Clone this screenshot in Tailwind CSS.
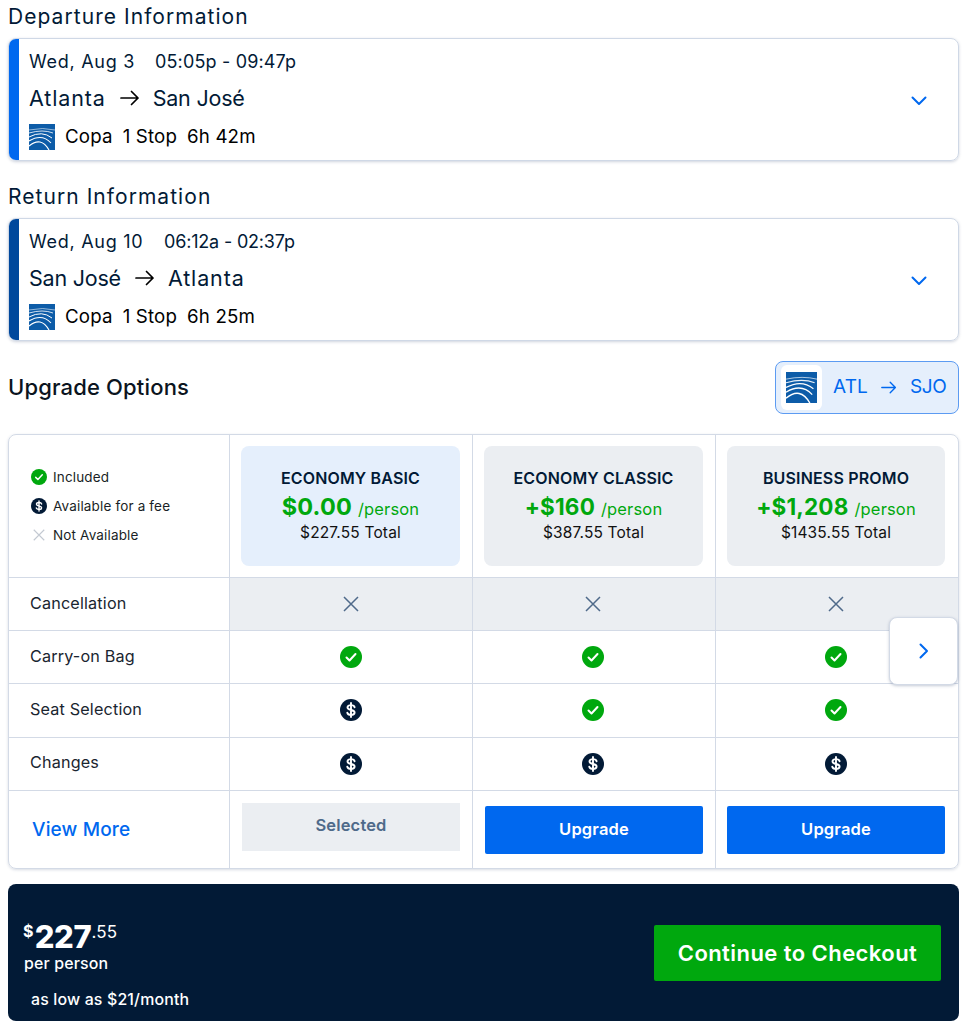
<!DOCTYPE html>
<html><head><meta charset="utf-8"><script src="https://cdn.jsdelivr.net/npm/@tailwindcss/browser@4"></script></head>
<body class="bg-white">
<svg class="hidden"><defs>
<symbol id="logo" viewBox="0 0 26 26"><rect width="26" height="26" fill="#0d5ca8"/><g fill="none" stroke="#fff"><path d="M0 6Q14 3 26 6" stroke-width=".7" opacity=".8"/><path d="M0 9Q14 5 24 9" stroke-width=".9" opacity=".9"/><path d="M0 13Q13 6 23 14" stroke-width="1"/><path d="M0 17Q13 9 22 19" stroke-width="1.1"/><path d="M0 22Q12 12 20 26" stroke-width="1.2"/></g></symbol>
<symbol id="chk" viewBox="0 0 22 22"><circle cx="11" cy="11" r="11" fill="#00a80e"/><path d="M6.5 11.5l3 3 6-6.5" fill="none" stroke="#fff" stroke-width="2" stroke-linecap="round" stroke-linejoin="round"/></symbol>
<symbol id="fee" viewBox="0 0 22 22"><circle cx="11" cy="11" r="11" fill="#021a36"/><path d="M14.6 8.2C14.3 6.9 13 6.1 11 6.1 8.9 6.1 7.5 7 7.5 8.5 7.5 10 8.9 10.5 11 11 13.2 11.5 14.6 12 14.6 13.5 14.6 15 13.100 15.900 11 15.900 8.900 15.900 7.600 15 7.300 13.700M11 4v14" fill="none" stroke="#fff" stroke-width="1.900" stroke-linecap="round"/></symbol>
<symbol id="x" viewBox="0 0 16 16"><path d="M1 1l14 14M15 1L1 15" fill="none" stroke="currentColor" stroke-width="1.500"/></symbol>
<symbol id="chev" viewBox="0 0 16 10"><path d="M1.500 1.500L8 8l6.500-6.500" fill="none" stroke="#0068ef" stroke-width="2" stroke-linecap="round" stroke-linejoin="round"/></symbol>
<symbol id="arr" viewBox="0 0 20 16"><path d="M1 8h17M11.500 1.500L18 8l-6.500 6.500" fill="none" stroke="currentColor" stroke-width="1.700" stroke-linecap="round" stroke-linejoin="round"/></symbol>
</defs></svg>

<main class="w-[951px] ml-2 font-['Inter',sans-serif] text-[#021a36] tracking-[0.01em]">
  <h2 class="h-[38px] pt-[4px] text-[21px] leading-[26px] tracking-[0.05em]">Departure Information</h2>
  <section class="h-[123px] flex items-stretch rounded-lg border border-[#cfd8e6] shadow-[0_1px_3px_rgba(60,80,120,0.25)] overflow-hidden">
    <div class="w-[10px] bg-[#0068ef] shrink-0"></div>
    <div class="flex-1 pl-[10px] pt-[11px]">
      <p class="text-[18px] leading-[24px] flex"><span class="w-[126px] tracking-[0.04em]">Wed, Aug 3</span><span>05:05p - 09:47p</span></p>
      <p class="mt-[11px] text-[21.500px] leading-[26px] flex items-center"><span class="tracking-[0.04em]">Atlanta</span><svg class="w-[20px] h-[16px] ml-[14px] mr-[13px] text-black"><use href="#arr"/></svg><span class="tracking-[-0.01em]">San José</span></p>
      <div class="mt-[13px] flex items-center text-black text-[18.700px] leading-[26px]"><svg class="w-[26px] h-[26px] mr-[10px]"><use href="#logo"/></svg><span class="mr-[10px]">Copa</span><span class="mr-[10px]">1 Stop</span><span>6h 42m</span></div>
    </div>
    <div class="w-[80px] flex items-center justify-start pl-[33px] pt-[2px]"><svg class="w-[16px] h-[10px]"><use href="#chev"/></svg></div>
  </section>
  <h2 class="h-[57px] pt-[23px] text-[21px] leading-[26px] tracking-[0.05em]">Return Information</h2>
  <section class="h-[123px] flex items-stretch rounded-lg border border-[#cfd8e6] shadow-[0_1px_3px_rgba(60,80,120,0.25)] overflow-hidden">
    <div class="w-[10px] bg-[#00489c] shrink-0"></div>
    <div class="flex-1 pl-[10px] pt-[11px]">
      <p class="text-[18px] leading-[24px] flex"><span class="w-[135px] tracking-[0.04em]">Wed, Aug 10</span><span class="tracking-[-0.01em]">06:12a - 02:37p</span></p>
      <p class="mt-[11px] text-[21.500px] leading-[26px] flex items-center"><span class="tracking-[-0.01em]">San José</span><svg class="w-[20px] h-[16px] ml-[14px] mr-[13px] text-black"><use href="#arr"/></svg><span class="tracking-[0.04em]">Atlanta</span></p>
      <div class="mt-[13px] flex items-center text-black text-[18.700px] leading-[26px]"><svg class="w-[26px] h-[26px] mr-[10px]"><use href="#logo"/></svg><span class="mr-[10px]">Copa</span><span class="mr-[10px]">1 Stop</span><span>6h 25m</span></div>
    </div>
    <div class="w-[80px] flex items-center justify-start pl-[33px] pt-[2px]"><svg class="w-[16px] h-[10px]"><use href="#chev"/></svg></div>
  </section>

  <div class="mt-[20px] h-[53px] flex items-center justify-between">
    <h2 class="text-[22px] leading-[26px] font-medium text-[#0b1420] pb-[2px]">Upgrade Options</h2>
    <div class="w-[184px] h-[53px] rounded-lg border border-[#5c9bf2] bg-[#e5effc] flex items-center text-[#0068ef] text-[19px] pl-[5px]">
      <div class="w-[41px] h-[45px] bg-white rounded-md flex items-center justify-center"><svg class="w-[31px] h-[31px]"><use href="#logo"/></svg></div>
      <span class="ml-[11px]">ATL</span><svg class="w-[16px] h-[13px] mx-[13px]"><use href="#arr"/></svg><span class="tracking-[-0.02em]">SJO</span>
    </div>
  </div>

  <section class="relative mt-[20px] h-[435px] rounded-lg border border-[#d3dae6] shadow-[0_1px_3px_rgba(60,80,120,0.2)]">
    <div class="grid grid-cols-[221px_243px_243px_242px] grid-rows-[143px_53px_53px_54px_53px_77px] h-full text-[#021a36]">
      <div class="border-r border-[#d3dae6] border-b pl-[22px] pt-[34px] text-[13.500px] text-[#1a1f26]">
        <div class="flex items-center h-[16px]"><svg class="w-[16px] h-[16px] mr-[6px]"><use href="#chk"/></svg>Included</div>
        <div class="flex items-center h-[16px] mt-[13px]"><svg class="w-[16px] h-[16px] mr-[6px]"><use href="#fee"/></svg>Available for a fee</div>
        <div class="flex items-center h-[16px] mt-[13px]"><svg class="w-[12px] h-[12px] ml-[2px] mr-[8px] text-[#c3c9d2]"><use href="#x"/></svg>Not Available</div>
      </div>
      <div class="border-r border-b border-[#d3dae6] pl-[11px] pr-[12px] pt-[11px] pb-[11px]"><div class="h-full rounded-lg bg-[#e5effc] flex flex-col items-center pt-[22px]"><b class="text-[16px] leading-[20px] font-semibold">ECONOMY BASIC</b><p class="text-[#00a80e] leading-[30px] text-[16.500px] whitespace-nowrap mt-[4px] flex items-baseline gap-[6px]"><b class="text-[23.500px] font-bold">$0.00</b><span>/person</span></p><p class="text-[15.500px] leading-[18px] text-[#111] mt-0">$227.55 Total</p></div></div>
      <div class="border-r border-b border-[#d3dae6] pl-[11px] pr-[12px] pt-[11px] pb-[11px]"><div class="h-full rounded-lg bg-[#ebeef2] flex flex-col items-center pt-[22px]"><b class="text-[16px] leading-[20px] font-semibold">ECONOMY CLASSIC</b><p class="text-[#00a80e] leading-[30px] text-[16.500px] whitespace-nowrap mt-[4px] flex items-baseline gap-[6px]"><b class="text-[22.500px] font-bold">+$160</b><span>/person</span></p><p class="text-[15.500px] leading-[18px] text-[#111] mt-0">$387.55 Total</p></div></div>
      <div class="border-b border-[#d3dae6] pl-[11px] pr-[13px] pt-[11px] pb-[11px]"><div class="h-full rounded-lg bg-[#ebeef2] flex flex-col items-center pt-[22px]"><b class="text-[16px] leading-[20px] font-semibold">BUSINESS PROMO</b><p class="text-[#00a80e] leading-[30px] text-[16.500px] whitespace-nowrap mt-[4px] flex items-baseline gap-[6px]"><b class="text-[22.500px] font-bold">+$1,208</b><span>/person</span></p><p class="text-[15.500px] leading-[18px] text-[#111] mt-0">$1435.55 Total</p></div></div>

      <div class="border-r border-b border-[#d3dae6] pl-[21px] pb-[2px] flex items-center text-[16.200px] text-[#1a2530]">Cancellation</div>
      <div class="border-r border-b border-[#d3dae6] bg-[#ebeef2] flex items-center justify-center text-[#4f6a8a]"><svg class="w-[16px] h-[16px]"><use href="#x"/></svg></div>
      <div class="border-r border-b border-[#d3dae6] bg-[#ebeef2] flex items-center justify-center text-[#4f6a8a] pr-[2px]"><svg class="w-[16px] h-[16px]"><use href="#x"/></svg></div>
      <div class="border-b border-[#d3dae6] bg-[#ebeef2] flex items-center justify-center text-[#4f6a8a] pr-[2px]"><svg class="w-[16px] h-[16px]"><use href="#x"/></svg></div>

      <div class="border-r border-b border-[#d3dae6] pl-[21px] pb-[2px] flex items-center text-[16.200px] text-[#1a2530]">Carry-on Bag</div>
      <div class="border-r border-b border-[#d3dae6] flex items-center justify-center"><svg class="w-[22px] h-[22px]"><use href="#chk"/></svg></div>
      <div class="border-r border-b border-[#d3dae6] flex items-center justify-center pr-[2px]"><svg class="w-[22px] h-[22px]"><use href="#chk"/></svg></div>
      <div class="border-b border-[#d3dae6] flex items-center justify-center pr-[2px]"><svg class="w-[22px] h-[22px]"><use href="#chk"/></svg></div>

      <div class="border-r border-b border-[#d3dae6] pl-[21px] pb-[2px] flex items-center text-[16.200px] text-[#1a2530]">Seat Selection</div>
      <div class="border-r border-b border-[#d3dae6] flex items-center justify-center pb-[2px]"><svg class="w-[22px] h-[22px]"><use href="#fee"/></svg></div>
      <div class="border-r border-b border-[#d3dae6] flex items-center justify-center pr-[2px] pb-[2px]"><svg class="w-[22px] h-[22px]"><use href="#chk"/></svg></div>
      <div class="border-b border-[#d3dae6] flex items-center justify-center pr-[2px] pb-[2px]"><svg class="w-[22px] h-[22px]"><use href="#chk"/></svg></div>

      <div class="border-r border-b border-[#d3dae6] pl-[21px] pb-[4px] flex items-center text-[16.200px] text-[#1a2530]">Changes</div>
      <div class="border-r border-b border-[#d3dae6] flex items-center justify-center"><svg class="w-[22px] h-[22px]"><use href="#fee"/></svg></div>
      <div class="border-r border-b border-[#d3dae6] flex items-center justify-center pr-[2px]"><svg class="w-[22px] h-[22px]"><use href="#fee"/></svg></div>
      <div class="border-b border-[#d3dae6] flex items-center justify-center pr-[2px]"><svg class="w-[22px] h-[22px]"><use href="#fee"/></svg></div>

      <div class="border-r border-[#d3dae6] pl-[23px] pt-[2px] flex items-center text-[19px] font-medium text-[#0068ef]">View More</div>
      <div class="border-r border-[#d3dae6] px-[12px] pt-[12px]"><div class="h-[48px] bg-[#ebeef2] flex items-center justify-center pb-[3px] text-[#4f6a8a] font-semibold text-[16.500px]">Selected</div></div>
      <div class="border-r border-[#d3dae6] px-[12px] pt-[15px]"><div class="h-[48px] rounded-[2px] bg-[#0068ef] flex items-center justify-center text-white font-semibold text-[16.500px] pb-[1px]">Upgrade</div></div>
      <div class="pl-[11px] pr-[13px] pt-[15px]"><div class="h-[48px] rounded-[2px] bg-[#0068ef] flex items-center justify-center text-white font-semibold text-[16.500px] pb-[1px]">Upgrade</div></div>
    </div>
    <div class="absolute left-[880px] top-[182px] w-[69px] h-[68px] bg-white rounded-lg border border-[#d3dae6] shadow-[0_1px_3px_rgba(60,80,120,0.3)] flex items-center justify-center"><svg class="w-[16px] h-[10px] -rotate-90"><use href="#chev"/></svg></div>
  </section>

  <section class="mt-[15px] h-[137px] rounded-lg bg-[#021a36] text-white flex items-center justify-between pl-[15px] pr-[18px]">
    <div class="pt-[16px]">
      <p class="flex items-start h-[40px]"><b class="text-[16px] leading-[24px] font-bold mt-[7px]">$</b><b class="text-[31px] leading-[42px] font-extrabold tracking-[-0.01em] mt-[4px] ml-[1px]">227</b><span class="text-[17px] leading-[24px] mt-[8px]">.55</span></p>
      <p class="text-[15.900px] leading-[20px] font-medium mt-[2px] ml-[1px]">per person</p>
      <p class="text-[15.900px] leading-[20px] font-medium mt-[16px] ml-[8px]">as low as $21/month</p>
    </div>
    <div class="w-[287px] h-[56px] mt-[1px] rounded-[2px] bg-[#00a80e] flex items-center justify-center text-[22px] font-semibold tracking-[0.02em]">Continue to Checkout</div>
  </section>
</main>
</body></html>
